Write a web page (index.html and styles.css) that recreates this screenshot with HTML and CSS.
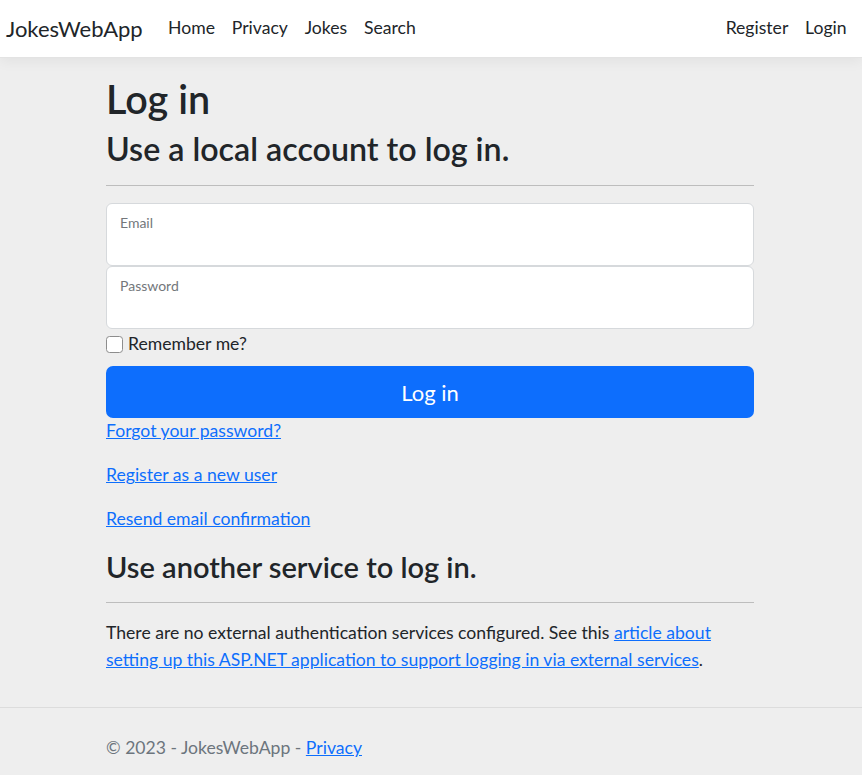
FILE: index.html
```html
<!DOCTYPE html>
<html lang="en">
<head>
<meta charset="utf-8">
<title>Log in - JokesWebApp</title>
<link rel="stylesheet" href="styles.css">
</head>
<body>
<header class="navbar">
  <a class="brand" href="#">JokesWebApp</a>
  <nav class="nav-main">
    <a class="nav-link" href="#">Home</a>
    <a class="nav-link" href="#">Privacy</a>
    <a class="nav-link" href="#">Jokes</a>
    <a class="nav-link" href="#">Search</a>
  </nav>
  <nav class="nav-auth">
    <a class="nav-link" href="#">Register</a>
    <a class="nav-link" href="#">Login</a>
  </nav>
</header>
<main class="container">
  <h1 class="title">Log in</h1>
  <h2 class="subtitle">Use a local account to log in.</h2>
  <hr class="rule">
  <form class="login-form">
    <div class="floating">
      <label class="float-label" for="email">Email</label>
      <input class="field" id="email" type="email">
    </div>
    <div class="floating">
      <label class="float-label" for="password">Password</label>
      <input class="field" id="password" type="password">
    </div>
    <label class="check">
      <span class="check-box"></span>
      <span class="check-text">Remember me?</span>
    </label>
    <button class="btn-primary" type="button">Log in</button>
  </form>
  <p class="para"><a class="link" href="#">Forgot your password?</a></p>
  <p class="para"><a class="link" href="#">Register as a new user</a></p>
  <p class="para"><a class="link" href="#">Resend email confirmation</a></p>
  <h3 class="section-title">Use another service to log in.</h3>
  <hr class="rule">
  <p class="para">There are no external authentication services configured. See this <a class="link" href="#">article about setting up this ASP.NET application to support logging in via external services</a>.</p>
</main>
<footer class="footer">
  <div class="container footer-inner">© 2023 - JokesWebApp - <a class="link" href="#">Privacy</a></div>
</footer>
</body>
</html>
```

FILE: styles.css
```css
html, body {
  margin: 0;
  padding: 0;
}
body {
  background: #eeeeee;
  color: #212529;
  font-family: Lato, "Open Sans", sans-serif;
  font-size: 17.6px;
  line-height: 1.5;
  min-height: 775px;
  display: flex;
  flex-direction: column;
}
.navbar {
  background: #ffffff;
  height: 58px;
  display: flex;
  align-items: center;
  padding: 0 7px 0 6px;
  box-sizing: border-box;
  border-bottom: 1px solid #e3e3e3;
  box-shadow: 0 4px 12px rgba(0,0,0,.05);
}
.brand {
  font-size: 22px;
  color: #212529;
  text-decoration: none;
  margin-right: 17px;
}
.nav-main, .nav-auth {
  display: flex;
}
.nav-auth {
  margin-left: auto;
}
.nav-link {
  color: #212529;
  text-decoration: none;
  padding: 0 8.4px;
  font-size: 17.6px;
}
.container {
  width: 648px;
  margin-left: calc(50% - 325px);
}
main.container {
  padding-top: 19px;
  padding-bottom: 14px;
  flex: 1;
}
.title {
  font-size: 39.5px;
  font-weight: 600;
  line-height: 44.5px;
  margin: 0 0 8.8px;
}
.subtitle {
  font-size: 32.2px;
  font-weight: 600;
  line-height: 37px;
  margin: 0;
}
.section-title {
  font-size: 29px;
  font-weight: 600;
  line-height: 33.6px;
  margin: 0;
}
.rule {
  border: 0;
  border-top: 1px solid #bdbdbd;
  margin: 17.6px 0;
}
.login-form {
  display: flex;
  flex-direction: column;
}
.floating {
  position: relative;
  height: 63px;
}
.float-label {
  position: absolute;
  left: 14px;
  top: 10px;
  font-size: 14px;
  color: #73777b;
  line-height: 20px;
}
.field {
  width: 100%;
  height: 63px;
  box-sizing: border-box;
  border: 1px solid #d6d9dc;
  border-radius: 6px;
  background: #fff;
  margin: 0;
}
.check {
  display: flex;
  align-items: center;
  margin-top: 2px;
  height: 26px;
}
.check-box {
  width: 15px;
  height: 15px;
  border: 1px solid #8d8d8d;
  border-radius: 3.5px;
  background: #fff;
  margin-right: 5px;
}
.check-text {
  font-size: 17.6px;
}
.btn-primary {
  margin-top: 9px;
  height: 52px;
  background: #0d6efd;
  color: #fff;
  border: 0;
  border-radius: 7px;
  font-family: inherit;
  font-size: 22px;
}
.para {
  margin: 0 0 17.6px;
}
.link {
  color: #0d6efd;
  text-decoration: underline;
}
.footer {
  border-top: 1px solid #dcdcdc;
}
.footer-inner {
  color: #6c757d;
  padding-top: 13px;
  line-height: 54px;
  height: 54px;
  white-space: nowrap;
}
```
